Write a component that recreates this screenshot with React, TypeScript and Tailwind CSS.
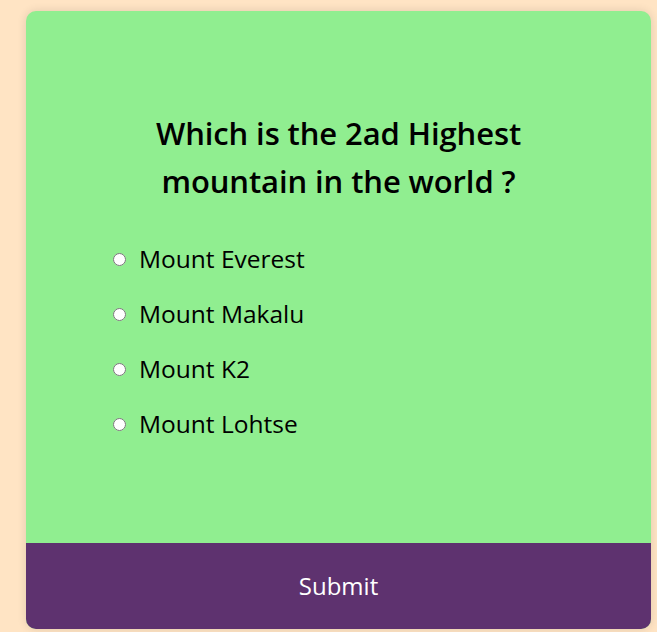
import React, { useState } from "react";

const options = ["Mount Everest", "Mount Makalu", "Mount K2", "Mount Lohtse"];

export default function App() {
  const [answer, setAnswer] = useState(""); // selected option

  return (
    <div
      className="min-h-screen bg-[#ffe4c4] pt-[11px] pl-[26px]"
      style={{ fontFamily: "'Open Sans', 'Liberation Sans', sans-serif" }}
    >
      <div className="w-[625px] h-[618px] bg-[#90ee90] rounded-[10px] shadow-[0_0_10px_rgba(0,0,0,0.12)] flex flex-col overflow-hidden">
        {/* Question */}
        <div className="flex-1 pt-[98px] px-[100px]">
          <h2 className="text-center text-[31px] leading-[48px] font-semibold text-black tracking-[-0.1px]">
            Which is the 2ad Highest
            <br />
            mountain in the world ?
          </h2>

          <ul className="mt-[38px] -ml-[13px] flex flex-col gap-[22px]">
            {options.map((opt) => (
              <li key={opt} className="flex items-center h-[33px]">
                <input
                  type="radio"
                  name="answer"
                  id={opt}
                  checked={answer === opt}
                  onChange={() => setAnswer(opt)}
                  className="w-[13px] h-[13px] m-0 mr-[13px]"
                />
                <label htmlFor={opt} className="text-[24.5px] text-black">
                  {opt}
                </label>
              </li>
            ))}
          </ul>
        </div>

        {/* Submit */}
        <button className="h-[86px] w-full bg-[#5e326f] text-white text-[24px]">
          Submit
        </button>
      </div>
    </div>
  );
}
